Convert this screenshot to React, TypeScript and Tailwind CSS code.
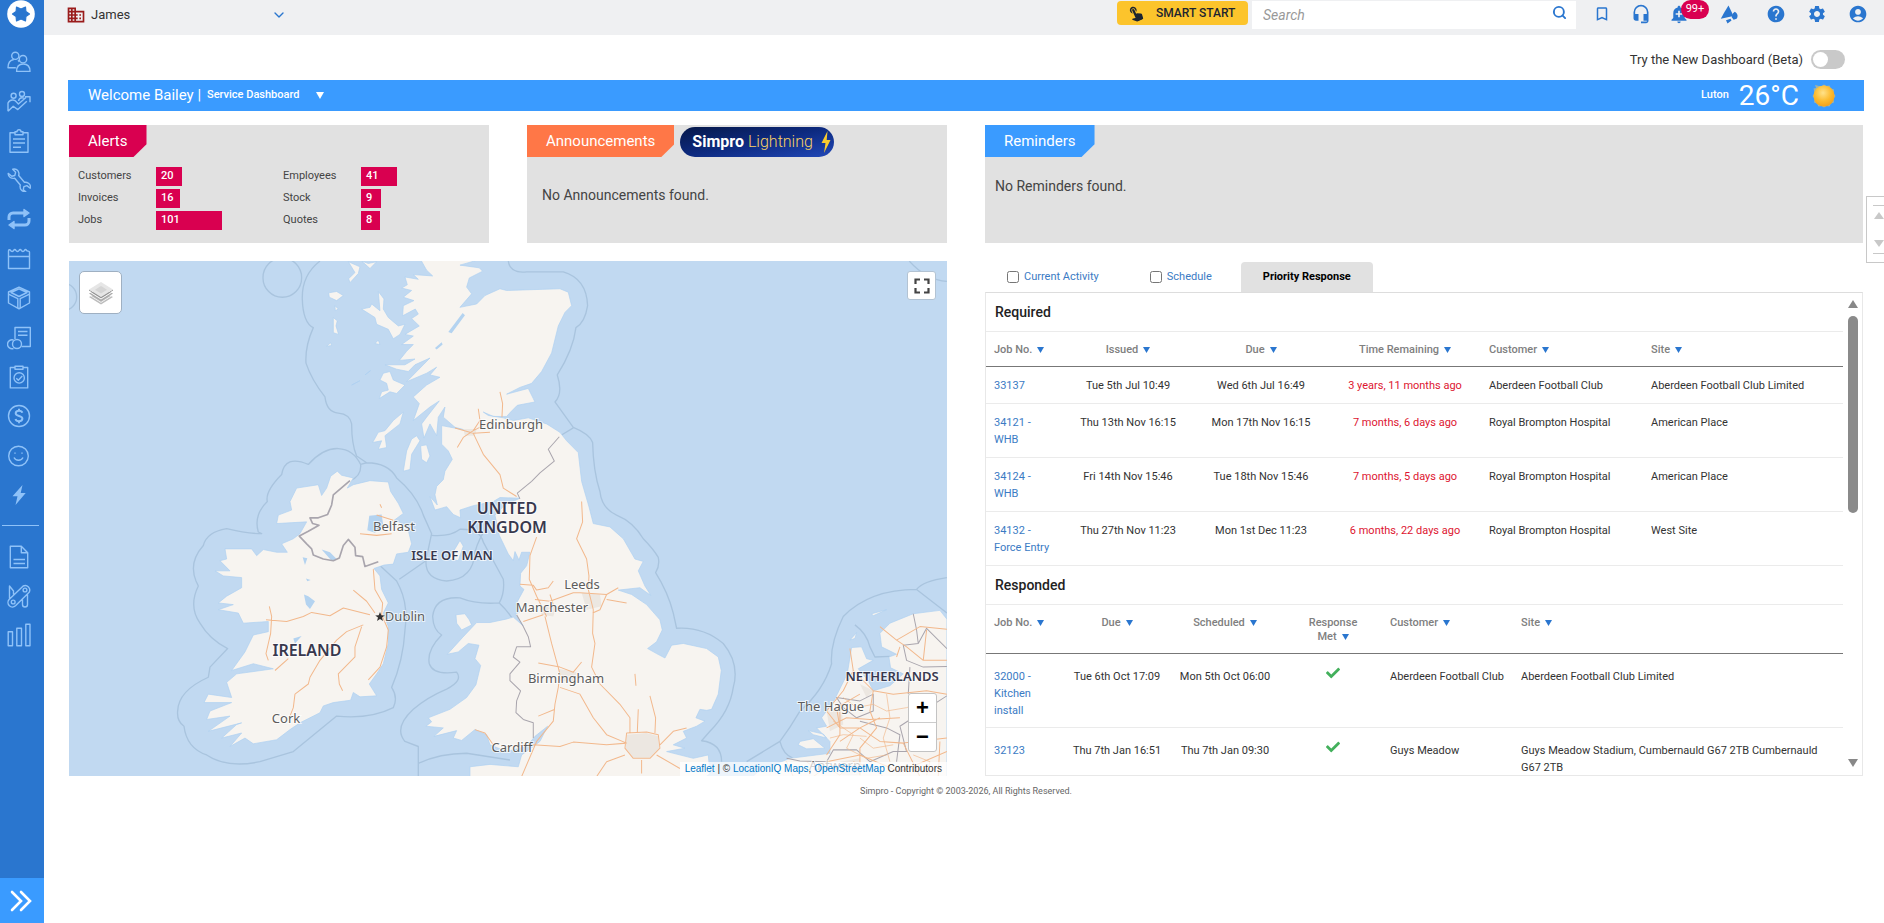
import React from 'react';
import {
  MdAccountCircle,
  MdAddAlert,
  MdBookmarkBorder,
  MdBusiness,
  MdHeadsetMic,
  MdHelp,
  MdSettings,
  MdTouchApp,
} from 'react-icons/md';
import { FaCheck } from 'react-icons/fa';
import { ChevronDown, Search } from 'lucide-react';

interface NavItem {
  label: string;
  icon: React.ReactNode;
}

interface Column {
  label: string;
  width: string;
  center?: boolean;
}

const mainNav: NavItem[] = [
  {
    label: 'People',
    icon: (
      <>
        <circle cx="8.3" cy="5.8" r="3.6" />
        <circle cx="16" cy="9.2" r="3.7" />
        <path d="M9.6 21.4c0-5.200 3-7.400 6.700-7.400s6.700 2.200 6.700 7.400z" />
        <path d="M8.800 17.800H1c0-5 1.800-7.600 5.800-8.300M11 10.200l1.400 1.600" />
      </>
    ),
  },
  {
    label: 'Leads',
    icon: (
      <>
        <circle cx="6.600" cy="6.800" r="2.500" />
        <circle cx="15" cy="5" r="2.500" />
        <path d="M1 22.300V14c1-2.400 3-3.300 5.200-3 1.400.2 2.500.9 3.600 2.200M11.500 12c.4-2.200 1.600-3.300 3.500-3.300 1.300 0 2.300.5 3 1.400M1 22.300l5.200-5.100 4.600 3.400 9-8.300M9.800 13.200l1.600 1.800L19 8.500M18 7.800h5v5.400" />
      </>
    ),
  },
  {
    label: 'Quotes',
    icon: (
      <>
        <path d="M8 3.700H3v19.600h18V3.700h-5" />
        <path d="M8 2.700h2a2 2 0 0 1 4 0h2v3H8zM6 10h12M6 14h12M6 18.300h8" />
      </>
    ),
  },
  {
    label: 'Jobs',
    icon: (
      <path d="M1.200 5.400 4.800 8.300 7.800 7.500 8.600 4.300 5.700 1.200C8.500.4 11.500 2 11.900 5.200c.1.900 0 1.500-.2 2.300l5.700 6.800c2.900-.6 6 1.600 6.100 4.500l-.3 1.400-3.300-2.600-3 1-.6 3.100 2.500 2c-3.500.2-6-2.200-5.700-5.600l.2-1.100-5.600-6.800C4.700 11 .9 9.100 1.200 5.400z" />
    ),
  },
  {
    label: 'Recurring',
    icon: (
      <>
        <path strokeWidth="3" d="M2 13V10a4 4 0 0 1 4-4h12M22 11v3a4 4 0 0 1-4 4H6" />
        <path fill="currentColor" d="m17 2.500 5 3.500-5 3.500zM7 14.500 2 18l5 3.500z" />
      </>
    ),
  },
  {
    label: 'Schedules',
    icon: (
      <path d="M1.500 21.500V4c0-1.600 1.500-1.600 2-.6.8 1.400 2.500 1.400 3.200 0 .6-1.200 1.600-1.200 2.200 0 .8 1.400 2.400 1.400 3.200 0 .6-1.200 1.600-1.200 2.200 0 .8 1.400 2.400 1.400 3.200 0 .6-1.200 1.400-1.200 2 0 .6 1.200 3 .2 3 1.600v16.500zM1.500 9.500h21" />
    ),
  },
  {
    label: 'Stock',
    icon: (
      <path d="M12 1.200 22.500 6v11L12 22.800 1.500 17V6zM4 6.500 12 2.800l8 3.700-8 4zM1.500 8.200l9.300 4.500v9.400M22.500 8.200l-9.300 4.500v9.400" />
    ),
  },
  {
    label: 'Invoices',
    icon: (
      <>
        <path d="M8 13V1.500h15.300v19H14.500M11 5.500h9.500M11 9.300h9.500" />
        <circle cx="10" cy="18" r="4.500" />
        <path d="M6.500 14a4.500 4.500 0 1 0 0 8.500" />
      </>
    ),
  },
  {
    label: 'Compliance',
    icon: (
      <>
        <path d="M8 2.500H3.300v20.400h17.400V2.500H16" />
        <path d="M8 1.200h8v3H8zM9.300 13.300l2 2 4-4.200" />
        <circle cx="12.200" cy="12.900" r="5.200" />
      </>
    ),
  },
  {
    label: 'Payments',
    icon: (
      <>
        <circle cx="12" cy="12" r="10.500" />
        <path strokeWidth="2" d="M15.300 8.800c-.4-1.400-1.700-2-3.300-2-2 0-3.300.9-3.300 2.500 0 3.500 6.700 1.800 6.700 5.300 0 1.700-1.400 2.600-3.400 2.600-1.800 0-3.100-.8-3.500-2.300M12 4.800v2M12 17v2.200" />
      </>
    ),
  },
  {
    label: 'Feedback',
    icon: (
      <>
        <circle cx="11.500" cy="12" r="9.800" />
        <path d="M7 13.500c1.500 3.600 7.500 3.600 9 0M8 8.500v1.200M15 8.500v1.200" />
      </>
    ),
  },
  {
    label: 'Actions',
    icon: (
      <path stroke="none" fill="currentColor" d="M15.500 2 5.500 13.300h5L8.500 22l10.200-12h-5z" />
    ),
  },
];

const toolsNav: NavItem[] = [
  {
    label: 'Documents',
    icon: <path d="M3.300 1.300h11l6.400 6.500v15H3.300zM14.300 1.300v6.500h6.400M6.500 14.500h11.500M6.500 18.500h11.500" />,
  },
  {
    label: 'Utilities',
    icon: (
      <>
        <path d="M16.200 2a4.600 4.600 0 0 1 6 6.300L8.500 21.800a4.500 4.500 0 0 1-6.400-6.300zM2.500 14.500V2l4 5v3.500M15.500 15.500v5a2.300 2.300 0 0 0 5 0v-10" />
        <circle cx="18" cy="6" r="1.900" />
        <circle cx="6.200" cy="18" r="1.900" />
      </>
    ),
  },
  {
    label: 'Reports',
    icon: <path d="M1.200 8.800h4.300v14H1.200zM9.800 5.300h4.700v17.500H9.800zM18.800 1.200H23v21.600h-4.200z" />,
  },
];

const alertColumns = [
  [
    { label: 'Customers', value: 20, width: 26 },
    { label: 'Invoices', value: 16, width: 24 },
    { label: 'Jobs', value: 101, width: 66 },
  ],
  [
    { label: 'Employees', value: 41, width: 36 },
    { label: 'Stock', value: 9, width: 20 },
    { label: 'Quotes', value: 8, width: 19 },
  ],
];

const requiredColumns: Column[] = [
  { label: 'Job No.', width: 'w-[77px]' },
  { label: 'Issued', width: 'w-[130px]', center: true },
  { label: 'Due', width: 'w-[136px]', center: true },
  { label: 'Time Remaining', width: 'w-[152px]', center: true },
  { label: 'Customer', width: 'w-[162px]' },
  { label: 'Site', width: 'w-auto' },
];

const requiredJobs = [
  { job: '33137', issued: 'Tue 5th Jul 10:49', due: 'Wed 6th Jul 16:49', remaining: '3 years, 11 months ago', customer: 'Aberdeen Football Club', site: 'Aberdeen Football Club Limited' },
  { job: '34121 - WHB', issued: 'Thu 13th Nov 16:15', due: 'Mon 17th Nov 16:15', remaining: '7 months, 6 days ago', customer: 'Royal Brompton Hospital', site: 'American Place' },
  { job: '34124 - WHB', issued: 'Fri 14th Nov 15:46', due: 'Tue 18th Nov 15:46', remaining: '7 months, 5 days ago', customer: 'Royal Brompton Hospital', site: 'American Place' },
  { job: '34132 - Force Entry', issued: 'Thu 27th Nov 11:23', due: 'Mon 1st Dec 11:23', remaining: '6 months, 22 days ago', customer: 'Royal Brompton Hospital', site: 'West Site' },
];

const respondedColumns: Column[] = [
  { label: 'Job No.', width: 'w-[82px]' },
  { label: 'Due', width: 'w-[98px]', center: true },
  { label: 'Scheduled', width: 'w-[118px]', center: true },
  { label: 'Response Met', width: 'w-[98px]', center: true },
  { label: 'Customer', width: 'w-[131px]' },
  { label: 'Site', width: 'w-auto' },
];

const respondedJobs = [
  { job: '32000 - Kitchen install', due: 'Tue 6th Oct 17:09', scheduled: 'Mon 5th Oct 06:00', customer: 'Aberdeen Football Club', site: 'Aberdeen Football Club Limited' },
  { job: '32123', due: 'Thu 7th Jan 16:51', scheduled: 'Thu 7th Jan 09:30', customer: 'Guys Meadow', site: 'Guys Meadow Stadium, Cumbernauld G67 2TB Cumbernauld G67 2TB' },
];

const NavIcon: React.FC<{ item: NavItem }> = ({ item }) => (
  <a href="#" aria-label={item.label} className="text-[#8fc2f8]">
    <svg viewBox="0 0 24 24" className="w-6 h-6" fill="none" stroke="currentColor" strokeWidth="1.400" strokeLinejoin="round">
      {item.icon}
    </svg>
  </a>
);

const Sidebar: React.FC = () => (
  <aside className="flex flex-col w-11 shrink-0 bg-[#2a76cf]">
    <a href="#" aria-label="Home" className="pl-[7px]">
      <svg viewBox="0 0 28 28" className="w-7 h-7">
        <circle cx="14" cy="14" r="13.800" fill="#fff" />
        <path
          fill="#2a76cf"
          stroke="#2a76cf"
          strokeWidth="1.200"
          strokeLinejoin="round"
          d="M9.500 7 14 9l4.500-2 .4 4.500 3.600 2.500-3.600 2.500-.4 4.500-4.500-2-4.500 2-.4-4.500L5.500 14l3.600-2.500z"
        />
      </svg>
    </a>

    <nav className="flex flex-col mt-[22px] pl-[7px]">
      <div className="flex flex-col justify-between h-[457px]">
        {mainNav.map((item) => (
          <NavIcon key={item.label} item={item} />
        ))}
      </div>
    </nav>
    <hr className="mt-[18px] ml-[2px] mr-[5px] border-[#8fc2f8]" />
    <nav className="flex flex-col gap-[15px] mt-[19px] pl-[7px]">
      {toolsNav.map((item) => (
        <NavIcon key={item.label} item={item} />
      ))}
    </nav>

    <button aria-label="Expand menu" className="mt-auto flex h-[45px] w-full items-center pl-[9px] bg-[#3a9bff]">
      <svg viewBox="0 0 24 24" className="w-6 h-6" fill="none" stroke="#fff" strokeWidth="2.600" strokeLinecap="round">
        <path d="m3 3 9 9-9 9M12 3l9 9-9 9" />
      </svg>
    </button>
  </aside>
);

const TopBar: React.FC = () => (
  <header className="flex h-[35px] items-start bg-[#eff0f2] pl-[22px] pr-[16px]">
    <div className="flex items-center h-[30px] w-[221px]">
      <MdBusiness className="w-5 h-5 text-[#9a1b1b]" />
      <span className="ml-[5px] flex-1 text-[13px] text-[#333]">James</span>
      <button aria-label="Change company">
        <ChevronDown className="w-4 h-4 text-[#2a76cf]" />
      </button>
    </div>

    <button className="ml-auto mt-px flex h-6 w-[131px] items-center rounded bg-[#fcc42c] pl-[9px] text-xs font-medium text-[#1c2430]">
      <MdTouchApp className="w-[18px] h-[18px] -rotate-[25deg]" />
      <span className="ml-[12px]">SMART START</span>
    </button>

    <form className="ml-1 mt-px flex h-7 w-[324px] items-center bg-white pr-[9px]">
      <input
        type="search"
        aria-label="Search"
        placeholder="Search"
        className="min-w-0 flex-1 pl-[11px] pb-px text-sm italic outline-none placeholder:text-[#999]"
      />
      <button type="button" aria-label="Run search" className="pb-[6px]">
        <Search className="w-[15px] h-[15px] text-[#2a76cf]" strokeWidth={3} />
      </button>
    </form>

    <div className="ml-[17px] flex h-[27px] w-[275px] items-center text-[#2a76cf]">
      <button aria-label="Bookmarks"><MdBookmarkBorder className="w-[18px] h-[18px]" /></button>
      <button aria-label="Support" className="ml-5"><MdHeadsetMic className="w-5 h-5" /></button>
      <button aria-label="Notifications" className="relative ml-[18px]">
        <MdAddAlert className="w-5 h-5" />
        <span className="absolute -top-[4px] left-3 flex h-[19px] w-7 items-center justify-center rounded-full bg-[#d90050] text-[11px] text-white">
          99+
        </span>
      </button>
      <button aria-label="Announcements" className="ml-[31px]">
        <svg viewBox="0 0 20 20" className="w-5 h-5" fill="currentColor">
          <path d="M8.500 1.500 13.500 12 .8 14.800 4.500 8z" />
          <path d="m13 9.200 1.800-1.400a4.600 4.600 0 0 1 1.800 7l-3 .9-2-2.700zM6 16.200l4.500-1.400 1 1.600-4 3z" />
        </svg>
      </button>
      <button aria-label="Help" className="ml-[26px]"><MdHelp className="w-5 h-5" /></button>
      <button aria-label="Settings" className="ml-[21px]"><MdSettings className="w-5 h-5" /></button>
      <button aria-label="Account" className="ml-[21px]"><MdAccountCircle className="w-5 h-5" /></button>
    </div>
  </header>
);

const WelcomeBar: React.FC = () => (
  <div className="mt-[11px] flex h-[31px] items-center bg-[#3a9bff] pl-5 pr-[27px] text-white">
    <span className="text-[15px]">Welcome Bailey |</span>
    <button className="ml-[6px] flex items-center text-[11px] font-medium">
      Service Dashboard
      <svg viewBox="0 0 8 7" className="ml-[17px] w-2 h-[7px]"><path fill="#fff" d="M0 0h8L4 7z" /></svg>
    </button>
    <span className="ml-auto text-[11px] font-medium">Luton</span>
    <span className="ml-[10px] text-[28px] leading-[31px]">26°C</span>
    <svg viewBox="0 0 26 26" className="ml-[12px] w-[26px] h-[26px]">
      <defs>
        <radialGradient id="sun" cx="0.450" cy="0.350" r="0.650">
          <stop offset="0" stopColor="#ffe28a" />
          <stop offset="0.600" stopColor="#fcbb2f" />
          <stop offset="1" stopColor="#f3a21c" />
        </radialGradient>
      </defs>
      <path fill="#e9c46a" d="M13 1.500 15.500 3l3-.5 1.500 3 3 1L22.500 10l2 3-2 3 .5 3.500-3 1-1.500 3-3-.5-2.500 1.500-2.500-1.500-3 .5-1.500-3-3-1 .5-3.500-2-3 2-3L2.500 5.500 5 5 4 2l4 1 2.500 0z" opacity=".6" />
      <circle cx="13" cy="13" r="10.500" fill="url(#sun)" />
    </svg>
  </div>
);

// Card heading with the cut bottom right corner
const CardTab: React.FC<{ color: string; children: string }> = ({ color, children }) => (
  <h2
    className={`flex h-8 items-center px-[19px] text-[15px] text-white [clip-path:polygon(0_0,100%_0,100%_60%,calc(100%-13px)_100%,0_100%)] ${color}`}
  >
    {children}
  </h2>
);

const AlertsCard: React.FC = () => (
  <section className="h-[118px] bg-[#e1e1e1]">
    <div className="flex">
      <CardTab color="bg-[#d90050]">Alerts</CardTab>
    </div>
    <div className="mt-[10px] grid grid-cols-[205px_1fr] pl-[9px]">
      {alertColumns.map((rows, i) => (
        <dl key={i} className="flex flex-col gap-[3px]">
          {rows.map((row) => (
            <div key={row.label} className="flex h-[19px] items-center text-[11px]">
              <dt className="w-[78px] text-[#444]">{row.label}</dt>
              <dd className="flex h-full items-center bg-[#d90050] pl-[5px] font-medium text-white" style={{ width: row.width }}>
                {row.value}
              </dd>
            </div>
          ))}
        </dl>
      ))}
    </div>
  </section>
);

const AnnouncementsCard: React.FC = () => (
  <section className="h-[118px] bg-[#e1e1e1]">
    <div className="flex">
      <CardTab color="bg-[#ff7747]">Announcements</CardTab>
      <a
        href="#"
        className="ml-[6px] mt-[2px] flex h-[30px] w-[154px] items-center rounded-full bg-linear-to-br from-[#07194a] via-[#0d2a80] to-[#2148b8] pl-3 text-base text-white"
      >
        <b>Simpro</b>
        <span className="ml-1 font-light text-[#fad264]">Lightning</span>
        <svg viewBox="0 0 10 22" className="ml-2 h-[22px] w-[10px]">
          <path fill="#fbcb2d" d="M6.500 0 .5 12h4L3 22l6.500-13H5.700z" />
        </svg>
      </a>
    </div>
    <p className="mt-[28px] ml-[15px] text-sm text-[#444]">No Announcements found.</p>
  </section>
);

const RemindersCard: React.FC = () => (
  <section className="h-[118px] bg-[#e1e1e1]">
    <div className="flex">
      <CardTab color="bg-[#3a9bff]">Reminders</CardTab>
    </div>
    <p className="mt-[19px] ml-[10px] text-sm text-[#444]">No Reminders found.</p>
  </section>
);

const cities = [
  { name: 'Edinburgh', x: 442, y: 168 },
  { name: 'Belfast', x: 325, y: 270 },
  { name: 'Dublin', x: 336, y: 360 },
  { name: 'Cork', x: 217, y: 462 },
  { name: 'Leeds', x: 513, y: 328 },
  { name: 'Manchester', x: 483, y: 351 },
  { name: 'Birmingham', x: 497, y: 422 },
  { name: 'Cardiff', x: 443, y: 491 },
  { name: 'The Hague', x: 762, y: 450 },
  { name: 'Antwerp', x: 766, y: 509 },
];

const countries = [
  { name: 'UNITED', x: 438, y: 253, size: 16 },
  { name: 'KINGDOM', x: 438, y: 272, size: 16 },
  { name: 'ISLE OF MAN', x: 383, y: 299, size: 13 },
  { name: 'IRELAND', x: 238, y: 395, size: 16 },
  { name: 'NETHERLANDS', x: 823, y: 420, size: 13 },
];

const MapPanel: React.FC = () => (
  <section aria-label="Map" className="relative h-[515px] overflow-hidden bg-[#c1d9f1]">
    <svg viewBox="0 0 878 515" preserveAspectRatio="xMidYMid slice" className="h-full w-full font-['Noto_Sans',sans-serif]">
      <g transform="translate(-9 -6) scale(.3333 .3378)" strokeLinejoin="round" fill="none">
        {/* Territorial waters */}
        <g stroke="#a9c4de" strokeWidth="4">
          <circle cx="667" cy="67" r="58" />
          <circle cx="10" cy="124" r="40" />
          <path d="M780 18Q725 60 727 130T760 215Q735 270 738 320 755 370 795 420 800 465 835 468T875 500Q875 560 890 595L920 615Q985 615 1010 660 1070 710 1090 770L1115 825Q1105 870 1098 905L1018 960M920 615 902 620Q880 575 835 573T745 620Q675 590 665 650 615 700 622 730 580 770 595 820L605 825Q560 825 500 810 440 820 430 860 385 910 408 965L415 980Q385 1040 420 1090 450 1140 503 1165L450 1220 445 1250Q355 1290 353 1350 350 1380 372 1395 380 1460 440 1480 500 1520 600 1500L700 1470 830 1365Q930 1375 1000 1340 1015 1310 995 1280 1030 1200 1035 1110 1045 1040 1020 985L1010 965 955 915M902 620Q905 655 870 668" />
          <path d="M1115 830Q1170 835 1200 812 1260 810 1270 850L1330 960Q1335 1000 1318 1030 1250 1035 1200 1015 1125 1010 1118 1070 1120 1110 1145 1125 1100 1170 1108 1210 1120 1245 1190 1235 1210 1260 1160 1285 1100 1310 1060 1345 1000 1400 1035 1440L1075 1455V1544M1075 1505Q1140 1475 1220 1475L1350 1495M1098 905Q1095 960 1160 965 1240 960 1245 880 1255 840 1290 790M1318 1030Q1350 1060 1365 1090" />
          <path d="M1345 18Q1350 55 1400 50H1510Q1580 70 1583 150 1575 200 1548 215 1540 280 1492 355 1510 410 1485 435L1540 510Q1590 530 1598 555 1600 640 1620 700 1625 750 1670 770 1720 790 1750 840 1780 870 1795 895 1800 920 1787 940 1825 1000 1840 1060L1850 1105Q1930 1100 1990 1150 2040 1210 2020 1280 2010 1350 1950 1410L1925 1438Q1985 1445 1985 1500M1501 535 1540 512" />
          <path d="M2661 955Q2590 965 2570 990 2430 990 2350 1070 2310 1150 2315 1210 2290 1290 2220 1350 2190 1400 2160 1440L2060 1500M2570 990 2661 1060M2548 18Q2600 75 2661 78M2160 1440Q2170 1480 2200 1490M2385 1095Q2420 1120 2430 1160L2445 1190 2490 1188" />
        </g>

        {/* Land */}
        <g fill="#f7f4f0" stroke="#aed0f1" strokeWidth="2">
          <path d="M1080 10 1100 45 1118 62 1060 58 1075 72 1035 65 1042 88 1025 98 1055 105 1030 125 1062 135 1030 150 1028 180 1066 160 1075 175 1055 188 1078 210 1035 235 1060 240 1025 265 1060 265 1040 285 1018 312 1065 308 1035 325 975 325 1010 338 1045 345 1065 325 1110 305 1040 375 1100 350 1130 332 1110 355 1140 362 1100 385 1060 420 1078 440 1060 490 1110 450 1138 432 1100 480 1085 500 1092 542 1110 500 1130 535 1135 480 1155 450 1150 480 1185 510 1215 518 1145 505 1145 560 1165 580 1177 605 1155 640 1150 665 1130 685 1125 710 1132 740 1110 715 1125 755 1160 745 1180 768 1202 778 1200 755 1240 742 1300 730 1320 718 1380 720 1335 740 1305 770 1318 830 1345 885 1360 905 1365 878 1377 903 1385 880 1410 880 1400 920 1382 942 1380 980 1392 990 1370 1030 1378 1058 1365 1062 1390 1098 1360 1072 1338 1078 1290 1088 1250 1088 1208 1132 1162 1182 1195 1175 1225 1150 1257 1155 1245 1195 1262 1215 1248 1272 1220 1310 1170 1345 1105 1370 1115 1382 1098 1395 1150 1400 1122 1425 1190 1408 1180 1430 1205 1437 1245 1405 1280 1420 1290 1450 1340 1470 1400 1455 1425 1425 1463 1395 1440 1440 1385 1480 1375 1515 1290 1508 1230 1515V1560H1920L1950 1535 1945 1480 1900 1490 1820 1470 1875 1460 1840 1450 1880 1430 1870 1410 1910 1395 1935 1380 1908 1370 1920 1345 1940 1348 1955 1345 1975 1300 1984 1230 1975 1190 1940 1165 1870 1150 1835 1155 1815 1193 1790 1180 1763 1165 1790 1145 1807 1110 1800 1080 1760 1035 1715 1005 1675 992 1740 985 1773 1008 1755 980 1735 935 1750 907 1725 900 1690 840 1650 805 1600 795 1587 745 1565 670 1555 585 1520 550 1500 525 1460 500 1405 482 1360 490 1330 482 1285 475 1270 465 1300 478 1340 478 1352 465 1372 445 1425 435 1420 425 1405 395 1340 412 1380 392 1415 380 1445 345 1475 290 1495 210 1515 170 1535 150 1525 110 1500 100 1340 105 1320 100 1275 120 1250 145 1200 155 1235 115 1220 95 1228 68 1268 48 1258 38 1200 30 1270 10Z" />
          <path d="M832 640 845 652 880 660 862 690 880 680 930 668 985 672 992 700 1015 735 1030 765 1003 785 1022 792 1045 815 1055 855 1045 880 1010 885 1000 915 972 918 942 928 960 950 965 990 985 1030 970 1060 985 1100 985 1150 970 1210 950 1240 928 1270 950 1305 900 1308 880 1295 872 1318 820 1325 790 1335 780 1355 720 1385 690 1405 650 1435 580 1447 555 1430 510 1455 545 1415 485 1430 530 1390 545 1385 445 1410 510 1365 440 1375 450 1350 515 1325 432 1325 445 1300 515 1310 500 1265 530 1240 640 1225 580 1210 515 1230 555 1175 580 1125 625 1115 625 1085 550 1090 535 1060 475 1050 520 1035 475 1030 500 1010 545 985 545 955 490 950 465 935 510 935 480 905 500 900 495 870 575 870 590 890 610 872 650 880 682 880 665 855 700 840 720 825 740 790 650 795 655 770 695 755 690 730 710 690 775 680 785 712 800 690 812 655Z" />
          {/* Islands */}
          <path d="M865 20 900 35 895 55 870 82 866 70 885 52ZM905 18 925 25 950 20 930 40ZM806 112 830 108 850 120 830 135 808 125ZM825 150 835 160 826 165ZM820 185 832 195 828 210 836 235 820 230ZM800 270 812 260 815 268ZM955 108 972 130 970 160 985 185 1015 210 1035 205 1020 235 1000 248 985 220 950 205 945 185 905 160 930 155 935 145 960 165ZM945 262 955 252 960 265ZM875 385 900 372ZM915 355 932 342ZM970 350 990 345 1000 370 1035 385 1010 410 990 405 958 425 965 405 985 400 980 380 960 370ZM1030 465 1020 500 975 535 980 570 955 575 965 550 938 555 955 525 975 520 1000 490ZM1070 535 1080 550 1055 590 1050 635 1030 640 1040 580 1055 545ZM1082 565 1100 562 1110 595 1100 615 1085 605ZM1200 845 1210 862 1195 905 1165 900 1185 870ZM1188 1065 1215 1062 1228 1080 1235 1095 1205 1110 1190 1090Z" />
          {/* Low Countries */}
          <path d="M2661 1078 2640 1052 2560 1062 2490 1090 2460 1120 2465 1160 2510 1182 2487 1190 2492 1222 2530 1240 2490 1275 2440 1290 2425 1260 2395 1225 2440 1200 2420 1195 2405 1160 2375 1162 2362 1240 2322 1320 2285 1370 2300 1395 2270 1400 2310 1440 2310 1475 2190 1490 2100 1525 2060 1560H2661ZM2220 1440 2260 1432 2295 1460 2240 1462 2215 1450ZM2245 1408 2290 1418 2300 1430 2260 1420ZM2370 1140 2390 1118 2385 1135ZM2435 1062 2480 1050 2440 1068Z" />
        </g>

        {/* Built-up areas */}
        <g fill="#ece7e1">
          <path d="M1700 1420 1760 1415 1795 1425 1798 1460 1770 1488 1720 1488 1697 1460ZM1565 1000 1620 1005 1625 1040 1580 1050ZM1495 1225 1550 1235 1545 1265 1500 1260ZM1210 515 1250 515 1245 535 1215 535ZM1440 1040 1490 1040 1480 1070 1445 1065Z" />
          <path d="M2300 1350 2345 1340 2350 1390 2310 1410ZM2400 1270 2440 1290 2420 1310ZM2340 1500 2400 1490 2400 1540 2345 1540Z" />
        </g>

        {/* Lakes and lochs */}
        <path fill="#b4d3f0" d="M928 772 965 768 970 800 945 822 922 815ZM1165 228 1208 172 1215 178 1175 232ZM1125 275 1145 258 1148 265 1130 280ZM728 895 742 898 735 918ZM732 1005 745 1010 765 1025 750 1048 738 1035ZM700 1135 725 1128 705 1150ZM785 872 810 880 830 900 815 905ZM738 958 752 962 742 966Z" />

        {/* Borders */}
        <g stroke="#a9a5ad" strokeWidth="5">
          <path d="M870 668 820 710 815 740 803 768 775 778 750 778 758 795 777 800 745 818 718 832 740 855 755 870 760 888 790 900 820 905 838 897 850 860 865 842 885 865 887 890 908 893 915 922 955 908" />
          <path strokeWidth="3" d="M1498 538 1465 575 1483 610 1440 645 1415 670 1372 705 1380 722M1370 1065 1390 1100 1405 1130 1412 1160 1370 1160 1360 1190 1380 1205 1350 1240 1350 1260 1382 1290 1370 1320 1368 1355 1390 1375 1420 1385V1430" />
          <path strokeWidth="3" d="M2560 1062 2570 1110 2575 1150 2530 1155 2540 1200 2590 1220 2661 1218M2575 1150 2600 1105 2661 1165M2180 1490 2220 1498 2300 1500 2320 1465 2390 1465 2430 1500 2500 1470 2540 1470 2520 1395 2590 1350 2661 1305M2330 1310 2400 1320 2440 1300 2440 1350 2390 1370 2350 1340ZM2400 1380 2480 1400 2520 1420 2510 1500M2550 1220 2545 1300" />
        </g>

        {/* Roads */}
        <g stroke="#f2b88c" strokeWidth="3">
          <path d="M940 930 945 990 968 1030 965 1065 985 1110 980 1160 960 1220 925 1258M880 992 920 1025 945 1060M618 1080 680 1085 730 1070 755 1058 810 1068 850 1045 930 1065M628 1040 635 1070 632 1120 618 1180 625 1200M910 1095 860 1115 830 1140 780 1200 750 1250 745 1270 705 1300 700 1340 690 1365M905 1100 885 1160 885 1190 835 1240 838 1270 848 1290M645 1230 685 1195M950 770 1000 785M900 825 950 830 995 825M960 738 965 748" />
          <path d="M1185 512 1240 528 1290 525M1255 455 1260 490 1240 520 1210 540 1192 570M1240 528 1270 590 1320 650 1330 690 1370 715M1320 405 1328 440 1326 480M1240 520 1300 490M1430 835 1410 890 1408 960 1430 1010 1460 1070M1565 730 1568 790 1550 840 1580 900 1587 950 1585 990 1600 1050 1598 1120 1605 1150 1595 1220 1620 1270M1380 975 1420 978 1430 992 1465 985 1480 965M1425 1020 1470 1025 1540 1000 1560 1000 1640 1005 1675 985M1470 1005 1480 1035M1390 1085 1450 1065M1455 1070 1475 1150 1500 1240 1495 1280 1485 1330 1480 1380 1430 1440 1385 1544M1435 1208 1500 1220 1540 1235 1565 1205M1500 1280 1560 1300 1600 1370 1640 1420 1700 1445M1620 1270 1680 1330 1710 1370 1710 1415M1700 1445 1640 1450 1540 1442 1500 1455 1420 1450 1340 1455M1700 1415 1760 1412 1795 1420 1800 1460 1770 1490 1720 1490 1695 1460ZM1735 1345 1732 1415M1770 1305 1787 1370 1785 1415M1800 1450 1840 1410 1880 1400M1790 1480 1860 1520M1745 1495V1535M1695 1480 1640 1500 1610 1544M1435 1365 1485 1345M1725 1240 1728 1275M1245 1405 1275 1415 1300 1450M1640 1005 1620 1050 1598 1060M1640 1020 1700 1030" />
          <path d="M2370 1165 2380 1230 2350 1290 2300 1350 2340 1400 2400 1400 2460 1440 2530 1445 2661 1430M2380 1230 2440 1290 2500 1300 2600 1290 2661 1300M2340 1400 2330 1340 2400 1300M2440 1290 2430 1350 2450 1400 2400 1460 2400 1540M2460 1100 2510 1140 2540 1160 2590 1200 2661 1200M2510 1140 2580 1100 2661 1108M2300 1400 2360 1370 2430 1375 2520 1370M2530 1445 2580 1544M2340 1440 2400 1400 2460 1370M2340 1330 2340 1420 2300 1480M2600 1110 2590 1200M2510 1190 2520 1160M2300 1500 2400 1480 2520 1530 2661 1470M2640 1440 2635 1544" />
          <path strokeWidth="2" d="M2320 1380 2380 1420 2360 1460 2420 1490 2480 1480M2290 1510 2340 1540 2380 1500 2440 1520 2470 1544M2350 1310 2390 1340 2440 1330 2480 1350 2540 1340 2600 1320M2400 1430 2440 1460 2500 1450M2560 1480 2610 1500 2600 1540M2480 1300 2490 1370 2470 1430 2490 1500M2310 1430 2350 1420 2420 1425M2240 1500 2280 1530 2260 1544M2180 1500 2200 1544" />
        </g>
      </g>

      <g fill="#5c5c5c" stroke="#fff" strokeWidth="2" paintOrder="stroke" strokeOpacity="0.700" textAnchor="middle" fontSize="13">
        {cities.map((city) => (
          <text key={city.name} x={city.x} y={city.y}>{city.name}</text>
        ))}
      </g>
      <path fill="#333" d="m311 351 1.300 3.300 3.500.1-2.800 2.200 1 3.400-3-2-3 2 1-3.400-2.800-2.200 3.500-.1z" />
      <g fill="#38384e" stroke="#fff" strokeWidth="2" paintOrder="stroke" strokeOpacity="0.700" textAnchor="middle" fontWeight="600">
        {countries.map((country) => (
          <text key={country.name} x={country.x} y={country.y} fontSize={country.size}>{country.name}</text>
        ))}
      </g>
    </svg>

    {/* Map controls */}
    <button aria-label="Layers" className="absolute left-[10px] top-[10px] flex h-[43px] w-[43px] items-center justify-center rounded-[5px] border border-[#9fb0c2] bg-white">
      <svg viewBox="0 0 26 26" className="w-[26px] h-[26px]">
        <path fill="#bdbdbd" d="m1 17 12 7.500L25 17l-3-1.500H4z" />
        <path fill="#fff" d="m1 14.500 12 7.500 12-7.500v.8L13 22.800 1 15.300z" />
        <path fill="#a8a8a8" d="m1 13.500 12 7.500 12-7.500-3-1.500H4z" />
        <path fill="#fff" d="m1 11 12 7.500L25 11v1L13 19.500 1 12z" />
        <path fill="#909090" d="m1 9.500 12 7.500 12-7.500v1L13 18 1 10.500z" />
        <path fill="#e6e6e6" d="M13 2 1 9.500 13 17l12-7.500z" />
        <path fill="#d5d5d5" d="M13 6 7 9.800l6 3.800 6-3.800z" />
      </svg>
    </button>
    <button aria-label="Full screen" className="absolute right-[11px] top-[10px] flex h-[29px] w-[29px] items-center justify-center rounded-[3px] border border-[#b3c3d3] bg-white">
      <svg viewBox="0 0 16 16" className="w-4 h-4" fill="none" stroke="#444" strokeWidth="2.200">
        <path d="M1.500 6V1.500H6M10 1.500h4.500V6M14.500 10v4.500H10M6 14.500H1.500V10" />
      </svg>
    </button>
    <div className="absolute bottom-6 right-[10px] flex w-[29px] flex-col rounded-[3px] border border-[#c3c3c3] bg-white font-['Liberation_Sans',sans-serif] text-[22px] font-bold leading-none text-black">
      <button aria-label="Zoom in" className="h-[29px] border-b border-[#ccc]">+</button>
      <button aria-label="Zoom out" className="h-[28px]">−</button>
    </div>
    <div className="absolute bottom-0 right-0 bg-white/70 px-[5px] font-['Liberation_Sans',sans-serif] text-[10px] leading-[14px] text-[#333]">
      <a href="#" className="text-[#0078c8]">Leaflet</a> | © <a href="#" className="text-[#0078c8]">LocationIQ Maps</a>,{' '}
      <a href="#" className="text-[#0078c8]">OpenStreetMap</a> Contributors
    </div>
  </section>
);

const TableHead: React.FC<{ columns: Column[] }> = ({ columns }) => (
  <thead>
    <tr className="border-b border-[#777]">
      {columns.map((col) => (
        <th
          key={col.label}
          scope="col"
          className={`pt-[11px] pb-[9px] align-top text-[11px] leading-[14px] font-medium text-[#808080] ${col.width} ${
            col.center ? 'text-center px-5' : 'text-left px-2'
          } ${col.label === 'Time Remaining' ? 'whitespace-nowrap' : ''}`}
        >
          {col.label}
          <svg viewBox="0 0 7 6" className="ml-[5px] inline w-[7px] h-[6px]"><path fill="#2a76cf" d="M0 0h7L3.500 6z" /></svg>
        </th>
      ))}
    </tr>
  </thead>
);

const PriorityResponse: React.FC = () => (
  <div className="flex h-[484px] border border-[#e8e8e8] border-t-[#ddd]">
    <div className="min-w-0 flex-1 overflow-hidden text-[11px] leading-[17px] text-[#333]">
      <h3 className="flex h-[39px] items-center border-b border-[#ebebeb] pl-[9px] text-sm font-medium text-[#222]">Required</h3>
      <table className="w-full table-fixed border-collapse">
        <TableHead columns={requiredColumns} />
        <tbody>
          {requiredJobs.map((row) => (
            <tr key={row.job} className="border-b border-[#ebebeb] align-top">
              <td className="px-2 pt-[10px] pb-[9px]"><a href="#" className="text-[#3b7bc4]">{row.job}</a></td>
              <td className="pt-[10px] text-center">{row.issued}</td>
              <td className="pt-[10px] text-center">{row.due}</td>
              <td className="pt-[10px] text-center text-[#dd1530]">{row.remaining}</td>
              <td className="px-2 pt-[10px]">{row.customer}</td>
              <td className="px-2 pt-[10px]">{row.site}</td>
            </tr>
          ))}
        </tbody>
      </table>

      <h3 className="flex h-[39px] items-center border-b border-[#ebebeb] pl-[9px] text-sm font-medium text-[#222]">Responded</h3>
      <table className="w-full table-fixed border-collapse">
        <TableHead columns={respondedColumns} />
        <tbody>
          {respondedJobs.map((row) => (
            <tr key={row.job} className="border-b border-[#ebebeb] align-top">
              <td className="px-2 pt-[14px] pb-[8px]"><a href="#" className="text-[#3b7bc4]">{row.job}</a></td>
              <td className="pt-[14px] text-center">{row.due}</td>
              <td className="pt-[14px] text-center">{row.scheduled}</td>
              <td className="pt-[12px]"><FaCheck aria-label="Yes" className="mx-auto w-[14px] h-[14px] text-[#43b05c]" /></td>
              <td className="px-2 pt-[14px] whitespace-nowrap">{row.customer}</td>
              <td className="px-2 pt-[14px]">{row.site}</td>
            </tr>
          ))}
        </tbody>
      </table>
    </div>

    {/* Scroll track */}
    <div className="flex w-[19px] flex-col items-center pt-[7px] pb-2">
      <svg viewBox="0 0 10 8" className="w-[10px] h-2"><path fill="#888" d="M5 0l5 8H0z" /></svg>
      <div className="mt-2 h-[197px] w-[10px] rounded-full bg-[#8a8a8a]" />
      <svg viewBox="0 0 10 8" className="mt-auto w-[10px] h-2"><path fill="#888" d="M5 8l5-8H0z" /></svg>
    </div>
  </div>
);

const JobsPanel: React.FC = () => (
  <section>
    <div className="flex h-[31px] gap-[7px] pt-px text-[11px]">
      <label className="flex items-center gap-[5px] px-[22px] text-[#3b7bc4]">
        <input type="checkbox" className="w-3 h-3" />
        Current Activity
      </label>
      <label className="flex items-center gap-[5px] px-[22px] text-[#3b7bc4]">
        <input type="checkbox" className="w-3 h-3" />
        Schedule
      </label>
      <button className="rounded-t-sm bg-[#e1e1e1] px-[22px] font-bold text-black">Priority Response</button>
    </div>
    <PriorityResponse />
  </section>
);

const ScrollHandle: React.FC = () => (
  <div className="absolute right-0 top-[196px] h-[67px] w-[18px] border border-r-0 border-[#c8c8c8] bg-white py-2 pl-[6px]">
    <div className="flex h-full flex-col items-end justify-between border-y border-[#c8c8c8] py-[6px]">
      <svg viewBox="0 0 10 7" className="w-[10px] h-[7px]"><path fill="#c8c8c8" d="M5 0l5 7H0z" /></svg>
      <svg viewBox="0 0 10 7" className="w-[10px] h-[7px]"><path fill="#c8c8c8" d="M5 7l5-7H0z" /></svg>
    </div>
  </div>
);

const App: React.FC = () => {
  return (
    <div className="relative flex min-h-screen bg-white font-['Roboto',sans-serif]">
      <Sidebar />
      <div className="flex-1 min-w-0">
        <TopBar />
        <main className="pl-6 pr-5">
          <label className="mt-[15px] mr-[19px] flex items-center justify-end gap-2 text-[13px] leading-[19px] text-[#333]">
            Try the New Dashboard (Beta)
            <span className="flex h-[19px] w-[34px] items-center rounded-full bg-[#c9c9c9] px-[2px]">
              <input type="checkbox" role="switch" className="h-[15px] w-[15px] appearance-none rounded-full bg-white" />
            </span>
          </label>

          <WelcomeBar />

          <div className="mt-[14px] ml-px mr-px grid grid-cols-2 gap-x-[38px] gap-y-[18px]">
            <div className="grid grid-cols-2 gap-[38px]">
              <AlertsCard />
              <AnnouncementsCard />
            </div>
            <RemindersCard />
            <MapPanel />
            <JobsPanel />
          </div>
        </main>
        <footer className="mt-2 pl-1 text-center text-[9px] leading-[14px] text-[#666]">
          Simpro - Copyright © 2003-2026, All Rights Reserved.
        </footer>
      </div>
      <ScrollHandle />
    </div>
  );
};

export default App;
